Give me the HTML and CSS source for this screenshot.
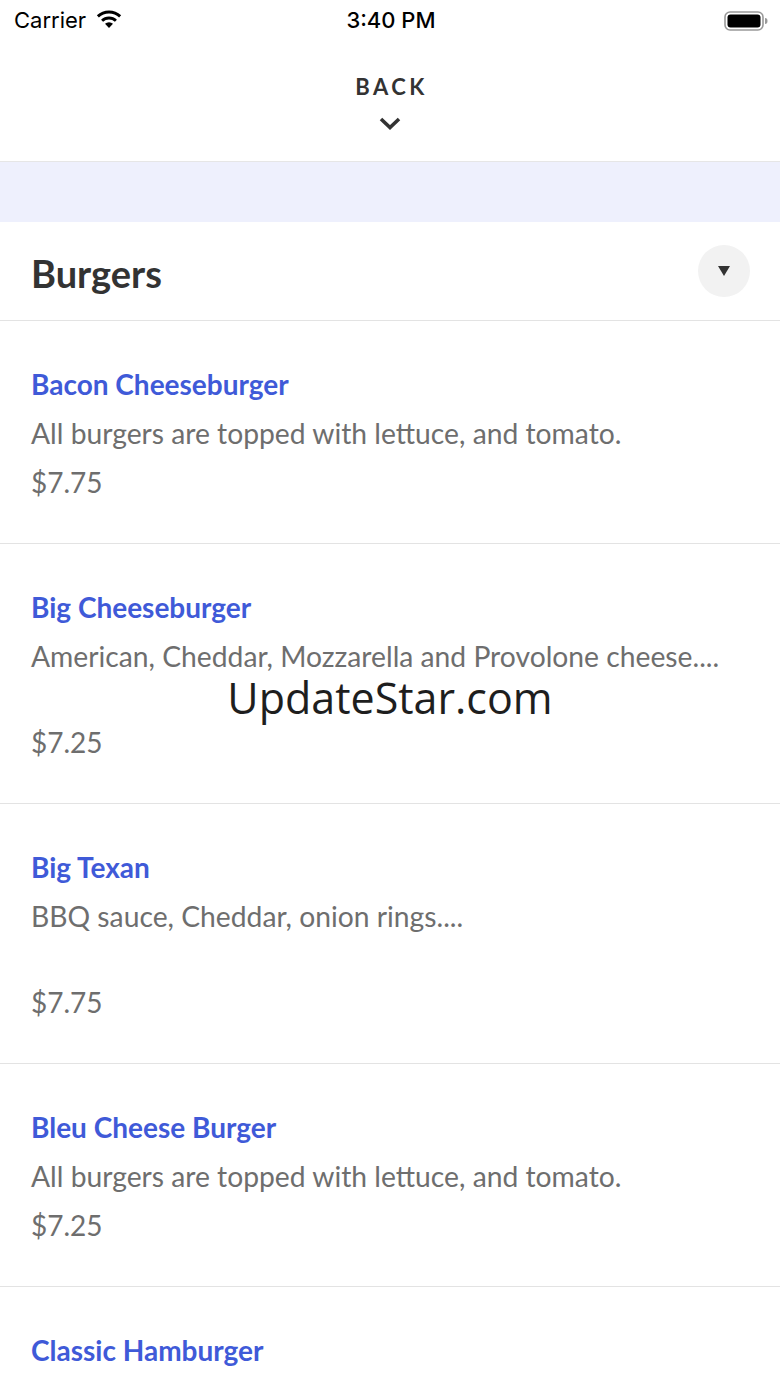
FILE: index.html
```html
<html><head>
	<meta charset="utf-8">
	<title>Menu</title>
	<link rel="stylesheet" href="styles.css">
</head>
<body>
	<div class="phone">
		<!-- status bar -->
		<div class="status">
			<div class="status-left">
				<span>Carrier</span>
				<svg class="wifi" width="28" height="21" viewBox="0 0 26 20">
					<path d="M13 19 L9.2 15 A5.6 5.6 0 0 1 16.8 15 Z" fill="#000"/>
					<path d="M6.4 12.1 A9.6 9.6 0 0 1 19.6 12.1" stroke="#000" stroke-width="2.8" fill="none"/>
					<path d="M2.4 8 A15.4 15.4 0 0 1 23.6 8" stroke="#000" stroke-width="2.8" fill="none"/>
				</svg>
			</div>
			<div class="status-time">3:40 PM</div>
			<div class="status-right">
				<svg width="44" height="22" viewBox="0 0 44 22">
					<rect x="1" y="2" width="38" height="18" rx="5" fill="none" stroke="#999" stroke-width="1.6"/>
					<rect x="3.5" y="4.5" width="33" height="13" rx="3" fill="#000"/>
					<path d="M41 8 v6 a2.5 3 0 0 0 0 -6z" fill="#999"/>
				</svg>
			</div>
		</div>

		<!-- back header -->
		<div class="back-bar">
			<div class="back-label">BACK</div>
			<svg class="chevron" width="24" height="16" viewBox="0 0 24 16">
				<path d="M3 3 L12 11.5 L21 3" stroke="#333" stroke-width="3.6" fill="none"/>
			</svg>
		</div>

		<div class="band"></div>

		<!-- section -->
		<div class="section-head">
			<h1>Burgers</h1>
			<div class="toggle"><span class="tri"></span></div>
		</div>

		<ul class="items">
			<li class="item">
				<div class="name">Bacon Cheeseburger</div>
				<div class="desc">All burgers are topped with lettuce, and tomato.</div>
				<div class="price">$7.75</div>
			</li>
			<li class="item">
				<div class="name">Big Cheeseburger</div>
				<div class="desc two">American, Cheddar, Mozzarella and Provolone cheese....</div>
				<div class="price">$7.25</div>
				<div class="watermark">UpdateStar.com</div>
			</li>
			<li class="item">
				<div class="name">Big Texan</div>
				<div class="desc two">BBQ sauce, Cheddar, onion rings....</div>
				<div class="price">$7.75</div>
			</li>
			<li class="item">
				<div class="name">Bleu Cheese Burger</div>
				<div class="desc">All burgers are topped with lettuce, and tomato.</div>
				<div class="price">$7.25</div>
			</li>
			<li class="item">
				<div class="name">Classic Hamburger</div>
			</li>
		</ul>
	</div>
</body></html>
```

FILE: styles.css
```css
* {
	margin: 0;
	padding: 0;
}

ul {
	list-style: none;
}

body {
	font-family: Lato, "Open Sans", sans-serif;
	color: #333;
	background: #fff;
	overflow: hidden;
}

.phone {
	width: 780px;
	height: 1387px;
	overflow: hidden;
}

/* status bar */
.status {
	height: 40px;
	display: flex;
	align-items: center;
	justify-content: space-between;
	padding: 0 12px 0 14px;
	font-family: Inter, "Liberation Sans", sans-serif;
	font-size: 22px;
	color: #000;
}
.status-left {
	display: flex;
	align-items: center;
	gap: 9px;
	width: 200px;
}
.wifi {
	margin-top: -3px;
}
.status-time {
	font-weight: 500;
}
.status-right {
	width: 200px;
	display: flex;
	justify-content: flex-end;
	padding-top: 2px;
}

/* back header */
.back-bar {
	height: 122px;
	border-bottom: 1px solid #e6e6e6;
	display: flex;
	flex-direction: column;
	align-items: center;
	padding-top: 33px;
	box-sizing: border-box;
}
.back-label {
	font-size: 22px;
	font-weight: bold;
	letter-spacing: 3.5px;
	line-height: 28px;
	color: #333;
	padding-left: 3px;
}
.chevron {
	margin-top: 15px;
}

.band {
	height: 60px;
	background: #eef0fd;
}

/* section head */
.section-head {
	height: 98px;
	display: flex;
	align-items: center;
	justify-content: space-between;
	padding: 0 30px 0 31px;
	border-bottom: 1px solid #e3e3e3;
}
.section-head h1 {
	font-size: 38px;
	font-weight: bold;
	color: #333;
	margin-top: 4px;
}
.toggle {
	width: 52px;
	height: 52px;
	border-radius: 50%;
	background: #f2f2f2;
	display: flex;
	align-items: center;
	justify-content: center;
}
.tri {
	width: 0;
	height: 0;
	border-left: 6px solid transparent;
	border-right: 6px solid transparent;
	border-top: 10px solid #333;
}

/* menu items */
.item {
	position: relative;
	padding: 44px 31px 43px;
	border-bottom: 1px solid #e3e3e3;
}
.name {
	font-size: 28px;
	font-weight: bold;
	line-height: 38px;
	color: #3f5ad8;
}
.desc {
	font-size: 28.25px;
	line-height: 36px;
	margin-top: 12px;
	color: #6e6e6e;
	white-space: nowrap;
}
.desc.two {
	height: 73px;
}
.price {
	font-size: 28px;
	line-height: 36px;
	margin-top: 13px;
	color: #6e6e6e;
}

.watermark {
	position: absolute;
	left: 0;
	right: 0;
	top: 127px;
	text-align: center;
	font-family: "Open Sans", "Noto Sans", sans-serif;
	font-size: 43px;
	line-height: 54px;
	color: #1e1e1e;
}
```
